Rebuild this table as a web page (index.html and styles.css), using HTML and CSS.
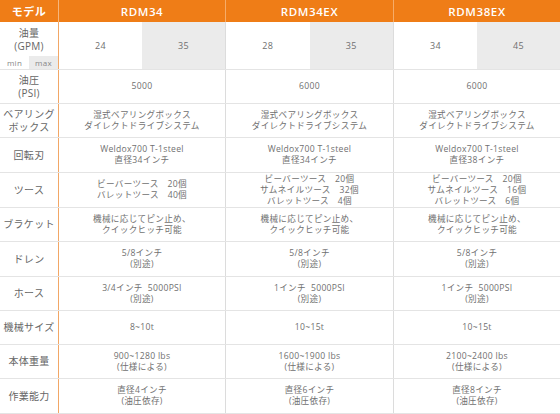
FILE: index.html
```html
<!DOCTYPE html>
<html lang="ja">
<head>
<meta charset="utf-8">
<link rel="stylesheet" href="styles.css">
</head>
<body>
<div class="spec">
  <div class="row head">
    <div class="label">モデル</div>
    <div class="cell">RDM34</div>
    <div class="cell">RDM34EX</div>
    <div class="cell">RDM38EX</div>
  </div>
  <div class="row flow">
    <div class="label">
      <div class="lbl-main">油量<br>(GPM)</div>
      <div class="minmax"><span class="min">min</span><span class="max">max</span></div>
    </div>
    <div class="cell split"><span>24</span><span class="gray">35</span></div>
    <div class="cell split"><span>28</span><span class="gray">35</span></div>
    <div class="cell split"><span>34</span><span class="gray">45</span></div>
  </div>
  <div class="row h34">
    <div class="label">油圧<br>(PSI)</div>
    <div class="cell">5000</div>
    <div class="cell">6000</div>
    <div class="cell">6000</div>
  </div>
  <div class="row h34">
    <div class="label">ベアリング<br>ボックス</div>
    <div class="cell">湿式ベアリングボックス<br>ダイレクトドライブシステム</div>
    <div class="cell">湿式ベアリングボックス<br>ダイレクトドライブシステム</div>
    <div class="cell">湿式ベアリングボックス<br>ダイレクトドライブシステム</div>
  </div>
  <div class="row h35">
    <div class="label">回転刃</div>
    <div class="cell">Weldox700 T-1steel<br>直径34インチ</div>
    <div class="cell">Weldox700 T-1steel<br>直径34インチ</div>
    <div class="cell">Weldox700 T-1steel<br>直径38インチ</div>
  </div>
  <div class="row h35">
    <div class="label">ツース</div>
    <div class="cell">ビーバーツース　20個<br>バレットツース　40個</div>
    <div class="cell">ビーバーツース　20個<br>サムネイルツース　32個<br>バレットツース　4個</div>
    <div class="cell">ビーバーツース　20個<br>サムネイルツース　16個<br>バレットツース　6個</div>
  </div>
  <div class="row h34">
    <div class="label">ブラケット</div>
    <div class="cell">機械に応じてピン止め、<br>クイックヒッチ可能</div>
    <div class="cell">機械に応じてピン止め、<br>クイックヒッチ可能</div>
    <div class="cell">機械に応じてピン止め、<br>クイックヒッチ可能</div>
  </div>
  <div class="row h35">
    <div class="label">ドレン</div>
    <div class="cell">5/8インチ<br>(別途)</div>
    <div class="cell">5/8インチ<br>(別途)</div>
    <div class="cell">5/8インチ<br>(別途)</div>
  </div>
  <div class="row h34">
    <div class="label">ホース</div>
    <div class="cell">3/4インチ&nbsp; 5000PSI<br>(別途)</div>
    <div class="cell">1インチ&nbsp; 5000PSI<br>(別途)</div>
    <div class="cell">1インチ&nbsp; 5000PSI<br>(別途)</div>
  </div>
  <div class="row h34">
    <div class="label">機械サイズ</div>
    <div class="cell">8~10t</div>
    <div class="cell">10~15t</div>
    <div class="cell">10~15t</div>
  </div>
  <div class="row h34">
    <div class="label">本体重量</div>
    <div class="cell">900~1280 lbs<br>(仕様による)</div>
    <div class="cell">1600~1900 lbs<br>(仕様による)</div>
    <div class="cell">2100~2400 lbs<br>(仕様による)</div>
  </div>
  <div class="row h35">
    <div class="label">作業能力</div>
    <div class="cell">直径4インチ<br>(油圧依存)</div>
    <div class="cell">直径6インチ<br>(油圧依存)</div>
    <div class="cell">直径8インチ<br>(油圧依存)</div>
  </div>
</div>
</body>
</html>
```
FILE: styles.css
```css
* { box-sizing: border-box; }
html, body { margin: 0; padding: 0; background: #fff; }
body {
  width: 560px;
  height: 414px;
  overflow: hidden;
  font-family: "Open Sans", "Noto Sans CJK JP", sans-serif;
  color: #707070;
}
.spec { display: flex; flex-direction: column; }
.row {
  display: grid;
  grid-template-columns: 59px 166px 168px 167px;
  border-bottom: 1px solid #e4e4e4;
}
.row.head {
  height: 22px;
  background: #ef7d17;
  border-bottom: none;
}
.row.flow { height: 48px; }
.row.h34 { height: 34px; }
.row.h35 { height: 35px; }
.label {
  border-right: 1px solid #f2a766;
  display: flex;
  flex-direction: column;
  align-items: center;
  justify-content: center;
  text-align: center;
  font-size: 10px;
  line-height: 13px;
  color: #666;
  letter-spacing: 0.3px;
}
.cell {
  display: flex;
  align-items: center;
  justify-content: center;
  text-align: center;
  font-size: 8.6px;
  line-height: 11px;
  letter-spacing: 0.3px;
}
.cell + .cell { border-left: 1px solid #dcdcdc; }
.head .label {
  color: #fff;
  font-weight: 700;
  font-size: 11px;
  border-right-color: #f6b67c;
  letter-spacing: 0.5px;
}
.head .cell {
  color: #fff;
  font-weight: 600;
  font-size: 11.5px;
  letter-spacing: 0.6px;
}
.head .cell + .cell { border-left-color: #f6ac68; }
.flow .label { justify-content: flex-start; align-items: stretch; }
.lbl-main {
  height: 34px;
  display: flex;
  align-items: center;
  justify-content: center;
  padding-top: 1px;
}
.minmax {
  display: grid;
  grid-template-columns: 29px 29px;
  height: 13px;
  font-size: 8px;
  line-height: 13px;
  color: #888;
}
.minmax .max { background: #ebebeb; }
.cell.split {
  display: grid;
  grid-template-columns: 1fr 1fr;
  align-items: stretch;
  font-size: 9px;
}
.cell.split span {
  display: flex;
  align-items: center;
  justify-content: center;
}
.cell.split .gray { background: #ebebeb; }
```
